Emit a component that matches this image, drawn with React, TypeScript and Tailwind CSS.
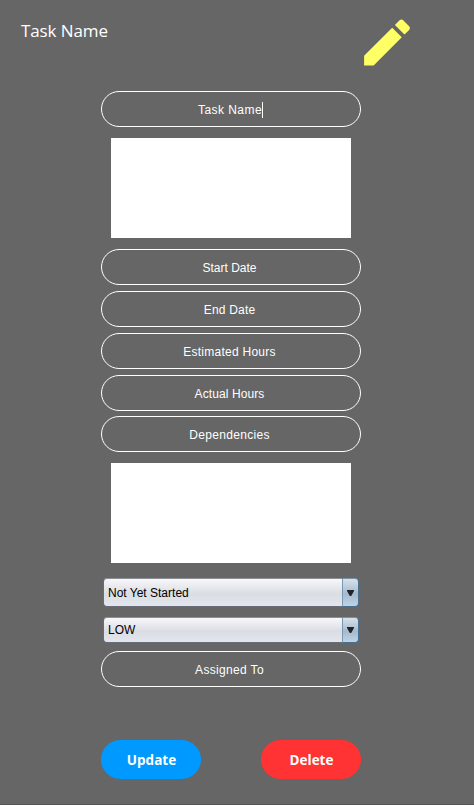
import React from "react";

function Field({ label, className = "", caret = false }: { label: string; className?: string; caret?: boolean }) {
  return (
    <div
      className={`flex h-9 w-[260px] items-center justify-center rounded-[18px] border border-white pt-px pr-[3px] text-white ${className}`}
    >
      <span>{label}</span>
      {caret && <span className="-mr-[2px] h-4 w-px bg-white" />}
    </div>
  );
}

function Select({ label, className = "" }: { label: string; className?: string }) {
  return (
    <div className={`ml-[2px] flex w-[256px] text-black ${className}`}>
      <div className="flex flex-1 items-center rounded-l-[4px] border border-r-0 border-[#686c78] border-t-[#8e8f95] bg-linear-to-b from-[#f8f8fa] via-[#dadde4] via-55% to-[#e3e7ed] pl-1">
        <span>{label}</span>
      </div>
      <div className="flex w-[17px] items-center justify-center rounded-r-[4px] border border-[#49708f] border-t-[#7893a9] border-l-[#7898b3] bg-linear-to-b from-[#d7e2eb] via-[#a5bace] via-55% to-[#bed3e4]">
        <svg width="7" height="6" viewBox="0 0 7 6">
          <path d="M0 0H7V1L4.2 6H2.8L0 1Z" fill="#20242a" />
        </svg>
      </div>
    </div>
  );
}

export default function App() {
  return (
    <main className="flex h-[805px] w-[474px] flex-col border-b border-[#555555] bg-[#666666] font-['Liberation_Sans',Arial,sans-serif] text-[12px] leading-4">
      <header className="flex h-[91px] shrink-0 justify-between pr-[56px] pl-[21px]">
        <h1 className="pt-[19px] font-['Open_Sans','Noto_Sans',sans-serif] text-[17px] leading-6 font-normal tracking-[-0.1px] text-white">
          Task Name
        </h1>
        <svg className="mt-[12px] h-[61px] w-[61px]" viewBox="0.2 0 24 24" fill="#ffff66">
          <path d="M3 17.25V21h3.75L17.81 9.94l-3.75-3.75L3 17.25zM20.71 7.04a1 1 0 0 0 0-1.41l-2.34-2.34a1 1 0 0 0-1.41 0l-1.83 1.83 3.75 3.75 1.83-1.83z" />
        </svg>
      </header>
      <form className="ml-[101px] flex w-[260px] flex-col">
        <Field label="Task Name" className="tracking-[0.45px]" caret />
        <div className="mt-[11px] ml-[10px] h-[100px] w-[240px] bg-white" />
        <Field label="Start Date" className="mt-[11px]" />
        <Field label="End Date" className="mt-1.5 tracking-[0.2px]" />
        <Field label="Estimated Hours" className="mt-1.5 tracking-[0.26px]" />
        <Field label="Actual Hours" className="mt-1.5 tracking-[0.1px]" />
        <Field label="Dependencies" className="mt-[5px] tracking-[0.32px]" />
        <div className="mt-[11px] ml-[10px] h-[100px] w-[240px] bg-white" />
        <Select label="Not Yet Started" className="mt-[15px] h-[29px]" />
        <Select label="LOW" className="mt-[10px] h-[26px]" />
        <Field label="Assigned To" className="mt-2 tracking-[0.34px]" />
        <div className="mt-[53px] flex justify-between font-['Open_Sans','Noto_Sans',sans-serif] text-[13.5px] font-bold text-white">
          <button type="button" className="h-[39px] w-[100px] rounded-full bg-[#0099ff] pl-px">
            Update
          </button>
          <button type="button" className="h-[39px] w-[100px] rounded-full bg-[#ff3333] pl-px">
            Delete
          </button>
        </div>
      </form>
    </main>
  );
}
